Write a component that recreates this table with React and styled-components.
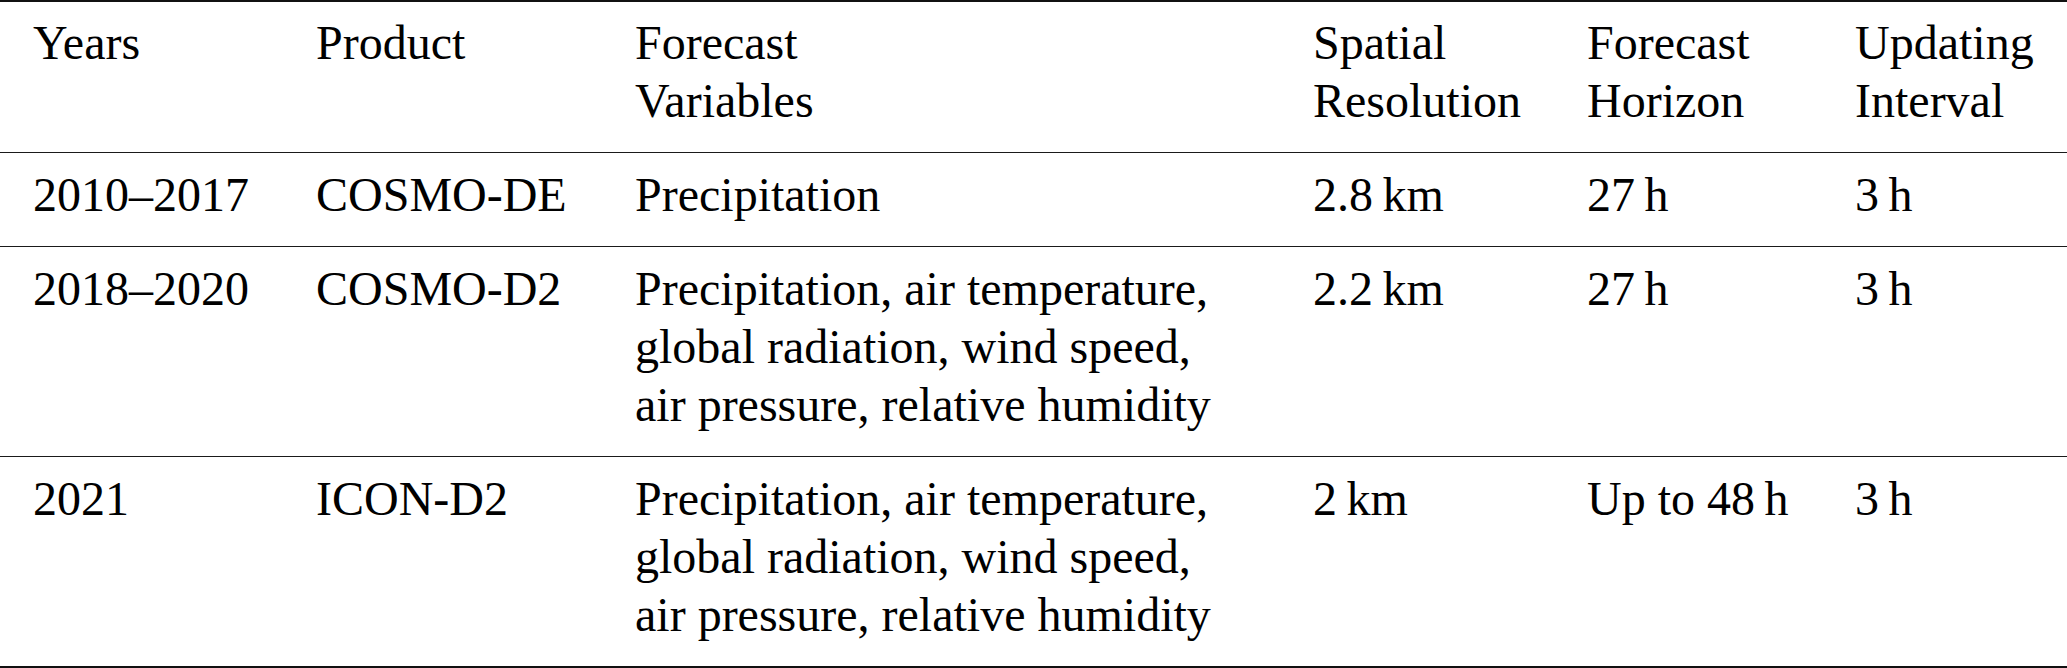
import styled, { createGlobalStyle } from 'styled-components';

const GlobalStyle = createGlobalStyle`
  html, body {
    margin: 0;
    padding: 0;
    background: #ffffff;
  }
`;

const Table = styled.div`
  width: 100%;
  border-top: 2px solid #111111;
  border-bottom: 2px solid #111111;
  font-family: 'Times New Roman', Times, 'Liberation Serif', serif;
  font-size: 48px;
  line-height: 58px;
  color: #000000;
`;

const Row = styled.div`
  display: grid;
  grid-template-columns: 283px 319px 678px 274px 268px 1fr;
  padding: ${(p) => (p.$head ? '12px' : '13px')} 0 22px 33px;
  border-top: ${(p) => (p.$head ? 'none' : '1px solid #1a1a1a')};
`;

const Cell = styled.div`
  display: flex;
  flex-direction: column;
  white-space: nowrap;
`;

const Line = styled.span`
  display: block;
`;

const columns = [
  ['Years'],
  ['Product'],
  ['Forecast', 'Variables'],
  ['Spatial', 'Resolution'],
  ['Forecast', 'Horizon'],
  ['Updating', 'Interval'],
];

const fullVars = [
  'Precipitation, air temperature,',
  'global radiation, wind speed,',
  'air pressure, relative humidity',
];

const rows = [
  [['2010–2017'], ['COSMO-DE'], ['Precipitation'], ['2.8\u2009km'], ['27\u2009h'], ['3\u2009h']],
  [['2018–2020'], ['COSMO-D2'], fullVars, ['2.2\u2009km'], ['27\u2009h'], ['3\u2009h']],
  [['2021'], ['ICON-D2'], fullVars, ['2\u2009km'], ['Up to 48\u2009h'], ['3\u2009h']],
];

function TableRow({ cells, head }) {
  return (
    <Row $head={head}>
      {cells.map((lines, i) => (
        <Cell key={i}>
          {lines.map((text, j) => (
            <Line key={j}>{text}</Line>
          ))}
        </Cell>
      ))}
    </Row>
  );
}

export default function App() {
  return (
    <>
      <GlobalStyle />
      <Table>
        <TableRow cells={columns} head />
        {rows.map((cells, i) => (
          <TableRow key={i} cells={cells} />
        ))}
      </Table>
    </>
  );
}
